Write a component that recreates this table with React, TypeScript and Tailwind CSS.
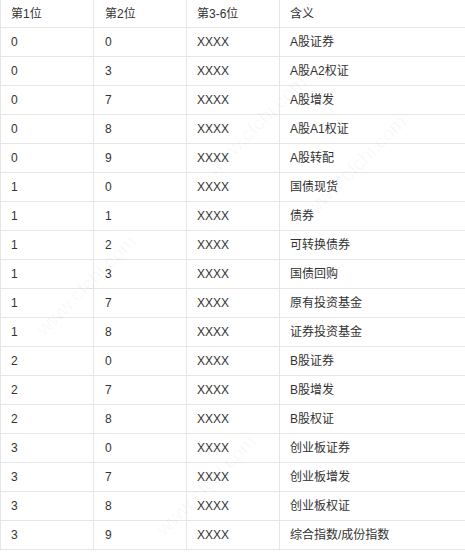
import React from "react";

const rows: [string, string, string, string][] = [
  ["0", "0", "XXXX", "A股证券"],
  ["0", "3", "XXXX", "A股A2权证"],
  ["0", "7", "XXXX", "A股增发"],
  ["0", "8", "XXXX", "A股A1权证"],
  ["0", "9", "XXXX", "A股转配"],
  ["1", "0", "XXXX", "国债现货"],
  ["1", "1", "XXXX", "债券"],
  ["1", "2", "XXXX", "可转换债券"],
  ["1", "3", "XXXX", "国债回购"],
  ["1", "7", "XXXX", "原有投资基金"],
  ["1", "8", "XXXX", "证券投资基金"],
  ["2", "0", "XXXX", "B股证券"],
  ["2", "7", "XXXX", "B股增发"],
  ["2", "8", "XXXX", "B股权证"],
  ["3", "0", "XXXX", "创业板证券"],
  ["3", "7", "XXXX", "创业板增发"],
  ["3", "8", "XXXX", "创业板权证"],
  ["3", "9", "XXXX", "综合指数/成份指数"],
];

function Row({ cells, header }: { cells: string[]; header?: boolean }) {
  return (
    <div className={`flex border-b border-[#e6e6e6] ${header ? "h-[28px]" : "h-[29px]"}`}>
      <div className="w-[94px] shrink-0 border-l border-r border-[#e6e6e6] pl-[10px] flex items-center">{cells[0]}</div>
      <div className="w-[93px] shrink-0 border-r border-[#e6e6e6] pl-[11px] flex items-center">{cells[1]}</div>
      <div className="w-[93px] shrink-0 border-r border-[#e6e6e6] pl-[10px] flex items-center">{cells[2]}</div>
      <div className="flex-1 pl-[10px] flex items-center whitespace-nowrap">{cells[3]}</div>
    </div>
  );
}

const marks = [
  { left: 190, top: 110 },
  { left: 290, top: 150 },
  { left: 20, top: 270 },
  { left: 140, top: 470 },
];

export default function App() {
  return (
    <div
      className="relative w-[465px] h-[552px] overflow-hidden bg-white text-[12px] text-[#333333]"
      style={{ fontFamily: '"Liberation Sans", Arial, "Noto Sans CJK SC", sans-serif' }}
    >
      <Row header cells={["第1位", "第2位", "第3-6位", "含义"]} />
      {rows.map((r, i) => (
        <Row key={i} cells={r} />
      ))}
      {marks.map((m, i) => (
        <div
          key={i}
          aria-hidden="true"
          className="pointer-events-none absolute text-[20px] text-[rgba(0,0,0,0.035)] -rotate-45 whitespace-nowrap"
          style={{ left: m.left, top: m.top }}
        >
          www.cfchi.com
        </div>
      ))}
    </div>
  );
}
